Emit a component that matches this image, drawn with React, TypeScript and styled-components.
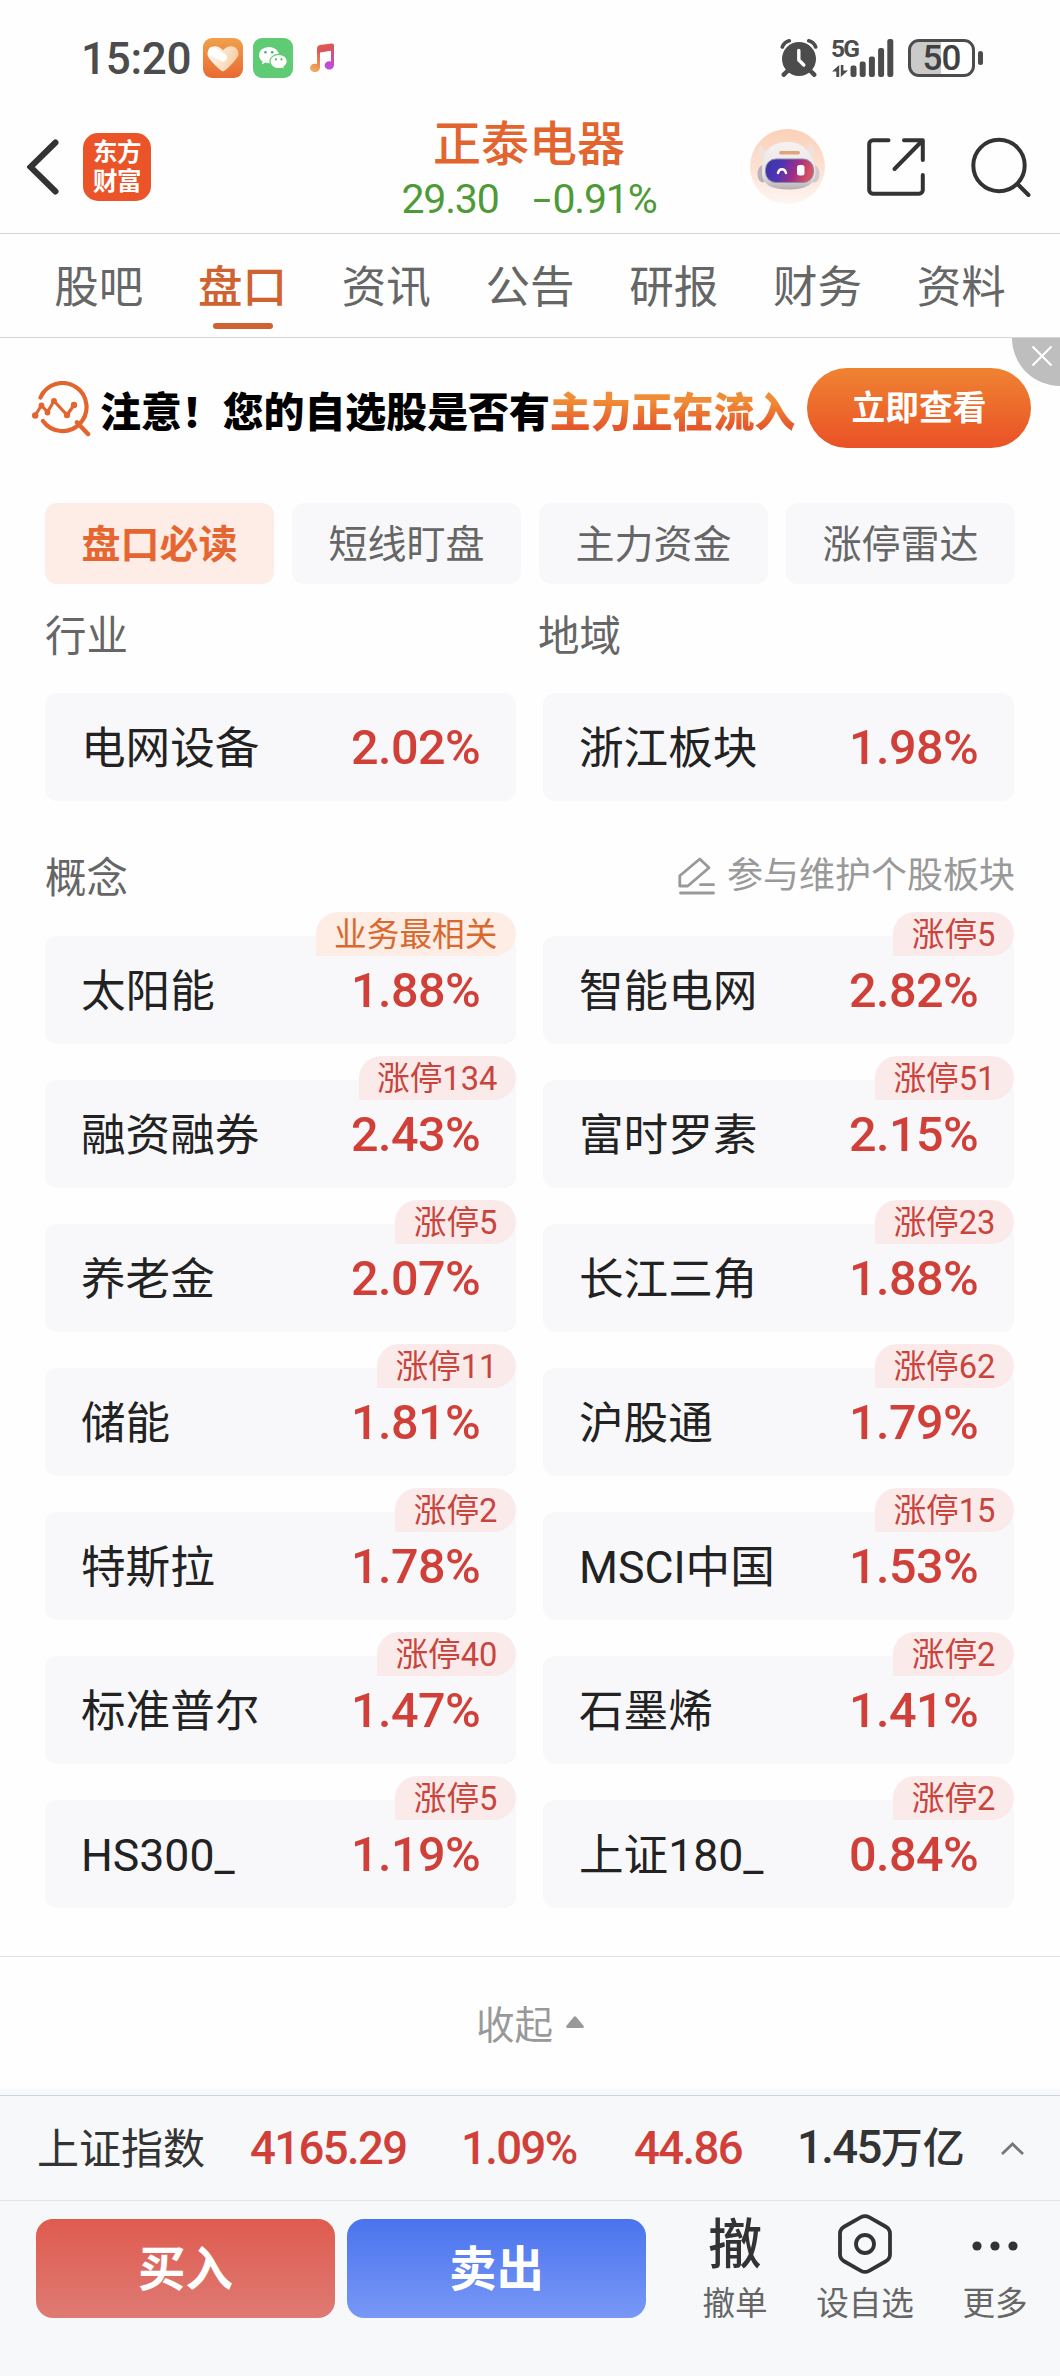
import React from "react";
import styled, { createGlobalStyle, css } from "styled-components";

const GlobalStyle = createGlobalStyle`
  * { box-sizing: border-box; }
  html, body { margin: 0; padding: 0; background: #fefefe; }
  body { font-family: Roboto, "Noto Sans CJK SC", sans-serif; color: #222; }
  button { font: inherit; border: 0; background: none; padding: 0; color: inherit; }
  svg { display: block; flex: none; }
`;

const Screen = styled.div`
  width: 1060px;
  height: 2376px;
  display: flex;
  flex-direction: column;
  background: #fefefe;
  overflow: hidden;
`;

const StatusBar = styled.header`
  height: 116px;
  padding: 0 77px 0 81px;
  display: flex;
  align-items: center;
  justify-content: space-between;
  color: #4c4c4c;
`;
const StatusGroup = styled.div<{ $gap: number }>`
  display: flex;
  align-items: center;
  gap: ${(p) => p.$gap}px;
`;
const Clock = styled.span`
  width: 112px;
  padding-top: 1px;
  font-size: 44px;
  font-weight: 500;
  line-height: 50px;
  letter-spacing: -0.3px;
  white-space: nowrap;
`;

const NavBar = styled.nav`
  height: 118px;
  flex: none;
  padding: 0 29px 0 27px;
  display: grid;
  grid-template-columns: 300px 1fr 300px;
  border-bottom: 1px solid #d5d5d5;
`;
const NavLeft = styled.div`
  display: flex;
  align-items: center;
  gap: 24px;
  height: 101px;
`;
const Logo = styled.div`
  width: 68px;
  height: 68px;
  border-radius: 15px;
  background: #ea5428;
  color: #fff;
  display: grid;
  grid-template-columns: 24px 24px;
  grid-auto-rows: 29px;
  justify-content: center;
  align-content: center;
  font-size: 24.5px;
  font-weight: 700;
  line-height: 29px;
  text-align: center;
`;
const StockTitle = styled.div`
  display: flex;
  flex-direction: column;
  align-items: center;
  padding-top: 1px;
`;
const StockName = styled.h1`
  margin: 0;
  font-size: 48px;
  font-weight: 500;
  line-height: 56px;
  color: #e2652f;
`;
const StockQuote = styled.div`
  display: flex;
  gap: 34px;
  margin-top: 3px;
  font-size: 41px;
  letter-spacing: -1.200px;
  line-height: 46px;
  color: #4d9a37;
`;
const Sign = styled.span`
  display: inline-block;
  width: 20px;
  transform: scaleX(1.6);
  transform-origin: 0 50%;
`;
const NavRight = styled.div`
  display: flex;
  align-items: center;
  justify-content: flex-end;
  height: 101px;
`;

const TabBar = styled.div`
  height: 104px;
  flex: none;
  padding: 0 27px;
  display: grid;
  grid-template-columns: repeat(7, 1fr);
  border-bottom: 1px solid #d5d5d5;
`;
const Tab = styled.button<{ $active?: boolean }>`
  display: flex;
  flex-direction: column;
  align-items: center;
  padding-top: 26px;
  font-size: 44.5px;
  line-height: 56px;
  color: ${(p) => (p.$active ? "#cf6231" : "#666")};
  ${(p) =>
    p.$active &&
    css`
      font-weight: 500;
      &::after {
        content: "";
        width: 60px;
        height: 6px;
        margin-top: 7px;
        border-radius: 3px;
        background: #cf6231;
      }
    `}
`;

const Banner = styled.section`
  position: relative;
  height: 165px;
  flex: none;
  padding: 30px 29px 0 32px;
  display: flex;
  align-items: flex-start;
`;
const BannerText = styled.p`
  margin: 14px 0 0 9px;
  width: 707px;
  font-size: 40.9px;
  font-weight: 900;
  line-height: 62px;
  color: #000;
  white-space: nowrap;
`;
const Accent = styled.span`
  background: linear-gradient(#f08c35 25%, #e4572b 80%);
  background-clip: text;
  -webkit-background-clip: text;
  color: transparent;
`;
const BannerButton = styled.button`
  width: 224px;
  height: 80px;
  flex: none;
  padding-top: 1px;
  border-radius: 40px;
  background: linear-gradient(#ef8332, #ea5126);
  color: #fff;
  font-size: 33.7px;
  font-weight: 700;
  line-height: 79px;
`;
const CloseCorner = styled.button`
  position: absolute;
  top: 0;
  right: 0;
  width: 48px;
  height: 48px;
  border-bottom-left-radius: 48px;
  background: #bebebe;
  display: flex;
  padding: 8px 0 0 20px;
`;

const Filters = styled.div`
  flex: none;
  padding: 0 45px;
  display: grid;
  grid-template-columns: repeat(4, 1fr);
  gap: 18px;
`;
const Filter = styled.button<{ $active?: boolean }>`
  height: 81px;
  padding-top: 3px;
  border-radius: 12px;
  font-size: 39px;
  line-height: 78px;
  background: ${(p) => (p.$active ? "#fdede6" : "#f8f8fa")};
  color: ${(p) => (p.$active ? "#e56630" : "#666")};
  font-weight: ${(p) => (p.$active ? 700 : 400)};
`;

const SectionHead = styled.div<{ $height: number; $top: number }>`
  flex: none;
  height: ${(p) => p.$height}px;
  padding: ${(p) => p.$top}px 45px 0;
  display: grid;
  grid-template-columns: 493px 1fr;
`;
const SectionLabel = styled.h2`
  margin: 0;
  font-size: 41.5px;
  font-weight: 400;
  line-height: 52px;
  color: #666;
`;
const MaintainLink = styled.a`
  height: 46px;
  display: flex;
  align-items: center;
  justify-content: flex-end;
  gap: 12px;
  font-size: 36px;
  line-height: 46px;
  color: #999;
  white-space: nowrap;
`;

const BoardGrid = styled.div`
  flex: none;
  padding: 0 45px;
  display: grid;
  grid-template-columns: 471px 471px;
  column-gap: 27px;
  row-gap: 36px;
`;
const BoardCard = styled.article`
  position: relative;
  height: 108px;
  padding: 0 36px;
  border-radius: 12px;
  background: #f8f8fa;
  display: flex;
  align-items: center;
  justify-content: space-between;
`;
const BoardName = styled.span`
  padding-top: 3px;
  font-size: 44.6px;
  line-height: 60px;
  color: #222;
`;
const BoardChange = styled.span`
  padding-top: 2px;
  font-size: 48.500px;
  font-weight: 500;
  line-height: 60px;
  letter-spacing: -0.6px;
  color: #d04038;
`;
const Badge = styled.span<{ $tone: "hot" | "main" }>`
  position: absolute;
  top: -24px;
  right: 0;
  height: 44px;
  padding: 1px 18.5px 0;
  border-radius: 22px 22px 22px 0;
  font-size: 32.7px;
  line-height: 45px;
  background: ${(p) => (p.$tone === "hot" ? "#fbeaea" : "#fdede4")};
  color: ${(p) => (p.$tone === "hot" ? "#c8443c" : "#d9692f")};
`;

const Collapse = styled.button`
  flex: none;
  height: 133px;
  margin-top: 48px;
  padding-bottom: 2px;
  border-top: 1px solid #e2e2e2;
  display: flex;
  align-items: center;
  justify-content: center;
  gap: 13px;
  font-size: 38.5px;
  color: #999;
`;

const BottomPanel = styled.footer`
  flex: 1;
  padding-top: 6px;
  background: #f7f8fa;
`;
const IndexRow = styled.div`
  height: 106px;
  padding: 0 36px 0 37px;
  border-top: 1px solid #d2d5d7;
  border-bottom: 1px solid #e2e4e6;
  display: grid;
  grid-template-columns: 213px 211px 173px 163px 203px 1fr;
  align-items: center;
  line-height: 60px;
  white-space: nowrap;
`;
const IndexName = styled.span`
  padding-top: 4px;
  font-size: 42px;
  color: #333;
`;
const IndexValue = styled.span<{ $dark?: boolean }>`
  padding-top: 1px;
  font-size: 45.500px;
  font-weight: 500;
  letter-spacing: -1.6px;
  color: ${(p) => (p.$dark ? "#333" : "#d04038")};
`;
const Unit = styled.span`
  font-size: 42px;
  letter-spacing: 0;
`;
const ActionRow = styled.div`
  padding: 18px 0 0 36px;
  display: flex;
  align-items: flex-start;
`;
const TradeButton = styled.button<{ $side: "buy" | "sell" }>`
  width: 299px;
  height: 99px;
  flex: none;
  margin-right: 12px;
  padding-top: 3px;
  border-radius: 17px;
  color: #fff;
  font-size: 47.5px;
  font-weight: 700;
  line-height: 96px;
  background: ${(p) =>
    p.$side === "buy"
      ? "linear-gradient(#df5b4f, #de7a73)"
      : "linear-gradient(#4a74ee, #7898f6)"};
`;
const Tool = styled.button<{ $width: number }>`
  width: ${(p) => p.$width}px;
  flex: none;
  display: flex;
  flex-direction: column;
  align-items: center;
  color: #333;
`;
const ToolIcon = styled.span<{ $shift?: number }>`
  height: 62px;
  margin-top: -6px;
  padding-top: ${(p) => p.$shift ?? 0}px;
  display: flex;
  align-items: center;
  font-size: 54px;
  font-weight: 500;
  line-height: 58px;
`;
const ToolLabel = styled.span`
  margin-top: 7px;
  font-size: 32.6px;
  line-height: 44px;
  color: #666;
`;
const Tools = styled.div`
  display: flex;
  margin-left: 10px;
`;

const HeartIcon = () => (
  <svg width="40" height="40" viewBox="0 0 40 40">
    <defs>
      <linearGradient id="heartBg" x1="0" y1="0" x2="0" y2="1">
        <stop offset="0" stopColor="#f0a04a" />
        <stop offset="1" stopColor="#e86a34" />
      </linearGradient>
      <linearGradient id="heartFill" x1="0" y1="0" x2="1" y2="0.3">
        <stop offset="0" stopColor="#fff" />
        <stop offset="0.5" stopColor="#fde6d2" />
        <stop offset="1" stopColor="#f9cfa8" />
      </linearGradient>
    </defs>
    <rect width="40" height="40" rx="9" fill="url(#heartBg)" />
    <path d="M20 33.5C18 33.5 5 21 4.600 17 4.200 11 8 8.300 12 8.300c3.500 0 6 2 8 4 2-2 4.500-4 8-4 4 0 7.800 3 7.500 8C35 21 22 33.500 20 33.500z" fill="url(#heartFill)" />
    <path d="M9.500 13L20 19.500" stroke="#fff" strokeWidth="8" strokeLinecap="round" />
  </svg>
);

const WeChatIcon = () => (
  <svg width="40" height="40" viewBox="0 0 40 40">
    <rect width="40" height="40" rx="9" fill="#5fcb74" />
    <path d="M16 9c-5.700 0-10 3.600-10 8.200 0 2.600 1.400 4.800 3.600 6.300L8.800 26.500l3.500-1.900c1.200.4 2.400.6 3.700.6 5.600 0 10-3.500 10-8S21.600 9 16 9z" fill="#fff" />
    <path d="M25.800 16.300c-4.900 0-8.800 3.200-8.800 7.200s3.900 7.200 8.800 7.200c1.100 0 2.100-.2 3-.5l2.700 1.500-.6-2.600c2.100-1.300 3.400-3.300 3.400-5.600 0-4-3.700-7.200-8.500-7.200z" fill="#fff" stroke="#5fcb74" strokeWidth="1.200" />
    <g fill="#4fae63">
      <circle cx="12.500" cy="14.300" r="1.300" />
      <circle cx="19.200" cy="14.300" r="1.300" />
      <circle cx="23" cy="21.300" r="1.100" />
      <circle cx="28.500" cy="21.300" r="1.100" />
    </g>
  </svg>
);

const MusicIcon = () => (
  <svg width="26" height="30" viewBox="0 0 26 30">
    <defs>
      <linearGradient id="note" x1="0" y1="0" x2="0.200" y2="1">
        <stop offset="0" stopColor="#e0603f" />
        <stop offset="0.450" stopColor="#d8506a" />
        <stop offset="1" stopColor="#c04be0" />
      </linearGradient>
      <linearGradient id="noteLeft" x1="0.600" y1="0" x2="0.300" y2="1">
        <stop offset="0" stopColor="#e0604a" />
        <stop offset="1" stopColor="#f0b060" />
      </linearGradient>
    </defs>
    <path d="M8 6.500h3V24c0 3-2.200 5-5.200 5C3 29 1 27.300 1 25s2-4.300 4.800-4.300c.8 0 1.500.1 2.200.4z" fill="url(#noteLeft)" />
    <path d="M8 10V5.500C8 3.500 9 2.500 11 2L22.500.500c1.700-.2 2.500.5 2.500 2V21.500c0 3-2 5-4.800 5-2.600 0-4.600-1.700-4.600-4s2-4.300 4.700-4.300c.7 0 1.200.1 1.700.3V7.800L11 9.500z" fill="url(#note)" />
  </svg>
);

const AlarmIcon = () => (
  <svg width="38" height="38" viewBox="0 0 38 38">
    <circle cx="19" cy="20" r="17" fill="#4c4c4c" />
    <g fill="none" stroke="#4c4c4c" strokeLinecap="round">
      <path d="M2.300 8C3.500 5 6 2.600 9.300 1.800M35.700 8C34.500 5 32 2.600 28.700 1.800" strokeWidth="3.600" />
      <path d="M7.500 32l-3.700 3.700M30.500 32l3.700 3.700" strokeWidth="4.500" />
    </g>
    <path d="M18.800 11.500V21l5 5" fill="none" stroke="#fefefe" strokeWidth="3.400" strokeLinecap="round" strokeLinejoin="round" />
  </svg>
);

const NetworkBox = styled.div`
  display: grid;
  grid-template-columns: 18px 44px;
  align-items: end;
  width: 62px;
  height: 38px;
  position: relative;
`;
const NetworkLabel = styled.span`
  position: absolute;
  left: -1px;
  top: -1px;
  font-size: 24.5px;
  line-height: 22px;
  font-weight: 700;
  letter-spacing: -1.800px;
`;
const DataArrows = () => (
  <svg width="16" height="12" viewBox="0 0 16 12" fill="#4c4c4c">
    <path d="M7.200 12H4.300V6.500H0L7.200 0zM8.800 0h2.600v5.500H16L8.800 12z" />
  </svg>
);
const SignalBars = () => (
  <svg width="44" height="38" viewBox="0 0 44 38" fill="#4c4c4c">
    <rect x="0.500" y="26.500" width="6" height="11.500" rx="2.200" />
    <rect x="9.700" y="22.500" width="6" height="15.500" rx="2.200" />
    <rect x="18.900" y="17.500" width="6" height="20.500" rx="2.200" />
    <rect x="28.100" y="9" width="6" height="29" rx="2.200" />
    <rect x="37.300" y="0" width="6" height="38" rx="2.200" />
  </svg>
);
const BatteryWrap = styled.div`
  display: flex;
  align-items: center;
  gap: 3px;
  &::after {
    content: "";
    width: 5px;
    height: 14px;
    border-radius: 3px;
    background: #4c4c4c;
  }
`;
const BatteryBody = styled.span`
  width: 67px;
  height: 38px;
  border: 3px solid #4c4c4c;
  border-radius: 11px;
  background: linear-gradient(90deg, #cacaca 50%, #fefefe 50%);
  color: #404040;
  font-size: 35px;
  font-weight: 500;
  line-height: 33px;
  letter-spacing: -1px;
  text-align: center;
`;

const BackIcon = () => (
  <svg width="32" height="56" viewBox="0 0 32 56">
    <path d="M28.500 3.500L3.500 28 28.500 52.500" fill="none" stroke="#333" strokeWidth="6" strokeLinecap="round" />
  </svg>
);

const AssistantIcon = () => (
  <svg width="75" height="75" viewBox="0 0 75 75">
    <defs>
      <linearGradient id="haloBg" x1="0" y1="0" x2="0" y2="1">
        <stop offset="0" stopColor="#fbd0b8" />
        <stop offset="0.600" stopColor="#fce4d8" />
        <stop offset="1" stopColor="#fef6f2" />
      </linearGradient>
      <linearGradient id="head" x1="0" y1="0" x2="0" y2="1">
        <stop offset="0" stopColor="#f7f3f2" />
        <stop offset="0.700" stopColor="#e6e1e3" />
        <stop offset="1" stopColor="#b5afb3" />
      </linearGradient>
      <linearGradient id="visor" x1="0" y1="0" x2="1" y2="0.200">
        <stop offset="0" stopColor="#3b34a2" />
        <stop offset="0.350" stopColor="#4b35b5" />
        <stop offset="0.700" stopColor="#a02f86" />
        <stop offset="1" stopColor="#d65260" />
      </linearGradient>
    </defs>
    <circle cx="37.500" cy="37.500" r="37.500" fill="url(#haloBg)" />
    <path d="M11.500 15.500c-4 4-3.500 10.500 1 13.500l6-7.500c-4 0-6.500-2-7-6zM60.500 14.500c4.500 4 4.500 10.500 0 14l-7-7c4 0 6.500-2.500 7-7z" fill="#efe2de" />
    <ellipse cx="12.500" cy="45" rx="5" ry="8.500" fill="#b9b3b9" />
    <ellipse cx="64.500" cy="45" rx="5" ry="8.500" fill="#cfc8cc" />
    <path d="M37 13c11 0 19 4.500 23 13 4 5 5.500 11 5.500 18C65.500 55 56 60.500 38.500 60.500S12 55 12 44c0-6 .5-13 3-19 4-8 12-12 22-12z" fill="url(#head)" />
    <rect x="29" y="22" width="21" height="3.600" rx="1.800" fill="#dfa675" />
    <rect x="15.500" y="30" width="48" height="23.500" rx="10.500" fill="url(#visor)" stroke="#8d86a8" strokeWidth="1" />
    <path d="M28 44c1-5 7-5 8 0" fill="none" stroke="#fff" strokeWidth="2.400" strokeLinecap="round" />
    <rect x="47" y="36" width="7.500" height="10.500" rx="2.500" fill="#fff" />
  </svg>
);

const ShareIcon = () => (
  <svg width="58" height="58" viewBox="0 0 58 58" fill="none" stroke="#333" strokeWidth="4" strokeLinecap="round" strokeLinejoin="round">
    <path d="M21.500 2.200H6A3.800 3.800 0 0 0 2.200 6V52A3.800 3.800 0 0 0 6 55.800H52A3.800 3.800 0 0 0 55.800 52V37" />
    <path d="M37 2.200H55.800V22M55 3L27.500 31" />
  </svg>
);

const SearchIcon = () => (
  <svg width="60" height="60" viewBox="0 0 60 60" fill="none" stroke="#333" strokeWidth="4" strokeLinecap="round">
    <circle cx="28" cy="28.500" r="25.700" />
    <path d="M47 47.500L57.500 58" />
  </svg>
);

const TrendIcon = () => (
  <svg width="59" height="56" viewBox="0 0 59 56" fill="none" stroke="#e2652f" strokeLinecap="round" strokeLinejoin="round">
    <path d="M8.500 16.500A24 24 0 1 1 11 40" strokeWidth="4.200" />
    <path d="M45 41.500L56 53" strokeWidth="4.500" />
    <path d="M3 34.500L9.500 24.500 15.500 31 22 20 35 34 42 24" strokeWidth="3.200" />
    <g fill="#e2652f" stroke="none">
      <circle cx="3.200" cy="34.500" r="3.200" />
      <circle cx="9.500" cy="24.500" r="2.900" />
      <circle cx="15.500" cy="31.500" r="2.900" />
      <circle cx="22" cy="20" r="3" />
      <circle cx="35" cy="34" r="3.200" />
      <circle cx="42" cy="24" r="3.200" />
    </g>
  </svg>
);

const CloseIcon = () => (
  <svg width="20" height="20" viewBox="0 0 20 20" fill="none" stroke="#fff" strokeWidth="2.200">
    <path d="M.5.5l19 19M19.500.5l-19 19" />
  </svg>
);

const PencilIcon = () => (
  <svg width="37" height="38" viewBox="0 0 37 38" fill="none" stroke="#999" strokeWidth="2.800" strokeLinecap="round" strokeLinejoin="round">
    <path d="M1.800 29V18.800L21.800 2 31 10.800 9.800 29zM22.500 27.700H35.500M2.500 36H35.500" />
  </svg>
);

const TriangleUp = () => (
  <svg width="18" height="12" viewBox="0 0 18 12">
    <path d="M7.500 1.200Q9-.6 10.500 1.200L17.300 9.500Q18.600 12 16.500 12H1.500Q-.6 12 .7 9.500z" fill="#999" />
  </svg>
);

const ChevronUp = () => (
  <svg width="24" height="13" viewBox="0 0 24 13" fill="none" stroke="#777" strokeWidth="2.800">
    <path d="M2 12L12.500 2 23 12" />
  </svg>
);

const HexIcon = () => (
  <svg width="54" height="60" viewBox="0 0 54 60" fill="none" stroke="#333" strokeWidth="3.800">
    <path d="M23 3.200Q27 1 31 3.200L47.500 12.500Q52 15 52 19.500V40.500Q52 45 47.500 47.500L31 56.800Q27 59 23 56.800L6.500 47.500Q2 45 2 40.500V19.500Q2 15 6.500 12.500z" />
    <circle cx="27" cy="30" r="9" />
  </svg>
);

const DotsIcon = () => (
  <svg width="48" height="10" viewBox="0 0 48 10" fill="#333">
    <circle cx="6" cy="5" r="4.600" />
    <circle cx="24" cy="5" r="4.600" />
    <circle cx="42" cy="5" r="4.600" />
  </svg>
);

const IconSlot = styled.span<{ $right?: number; $top?: number; $left?: number }>`
  display: flex;
  margin-right: ${(p) => p.$right ?? 0}px;
  margin-left: ${(p) => p.$left ?? 0}px;
  margin-top: ${(p) => p.$top ?? 0}px;
`;

const tabs = ["股吧", "盘口", "资讯", "公告", "研报", "财务", "资料"];
const filters = ["盘口必读", "短线盯盘", "主力资金", "涨停雷达"];

type Board = { name: string; change: string; badge?: string; main?: boolean };

const sectors: Board[] = [
  { name: "电网设备", change: "2.02%" },
  { name: "浙江板块", change: "1.98%" },
];

const concepts: Board[] = [
  { name: "太阳能", change: "1.88%", badge: "业务最相关", main: true },
  { name: "智能电网", change: "2.82%", badge: "涨停5" },
  { name: "融资融券", change: "2.43%", badge: "涨停134" },
  { name: "富时罗素", change: "2.15%", badge: "涨停51" },
  { name: "养老金", change: "2.07%", badge: "涨停5" },
  { name: "长江三角", change: "1.88%", badge: "涨停23" },
  { name: "储能", change: "1.81%", badge: "涨停11" },
  { name: "沪股通", change: "1.79%", badge: "涨停62" },
  { name: "特斯拉", change: "1.78%", badge: "涨停2" },
  { name: "MSCI中国", change: "1.53%", badge: "涨停15" },
  { name: "标准普尔", change: "1.47%", badge: "涨停40" },
  { name: "石墨烯", change: "1.41%", badge: "涨停2" },
  { name: "HS300_", change: "1.19%", badge: "涨停5" },
  { name: "上证180_", change: "0.84%", badge: "涨停2" },
];

const Boards = ({ items }: { items: Board[] }) => (
  <BoardGrid>
    {items.map((b) => (
      <BoardCard key={b.name}>
        <BoardName>{b.name}</BoardName>
        <BoardChange>{b.change}</BoardChange>
        {b.badge && <Badge $tone={b.main ? "main" : "hot"}>{b.badge}</Badge>}
      </BoardCard>
    ))}
  </BoardGrid>
);

export default function App() {
  return (
    <>
      <GlobalStyle />
      <Screen>
        <StatusBar>
          <StatusGroup $gap={10}>
            <Clock>15:20</Clock>
            <HeartIcon />
            <WeChatIcon />
            <IconSlot $left={6}>
              <MusicIcon />
            </IconSlot>
          </StatusGroup>
          <StatusGroup $gap={14}>
            <AlarmIcon />
            <NetworkBox>
              <NetworkLabel>5G</NetworkLabel>
              <DataArrows />
              <SignalBars />
            </NetworkBox>
            <BatteryWrap>
              <BatteryBody>50</BatteryBody>
            </BatteryWrap>
          </StatusGroup>
        </StatusBar>

        <NavBar>
          <NavLeft>
            <BackIcon />
            <Logo>
              <span>东</span>
              <span>方</span>
              <span>财</span>
              <span>富</span>
            </Logo>
          </NavLeft>
          <StockTitle>
            <StockName>正泰电器</StockName>
            <StockQuote>
              <span>29.30</span>
              <span>
                <Sign>-</Sign>0.91%
              </span>
            </StockQuote>
          </StockTitle>
          <NavRight>
            <IconSlot $right={42}>
              <AssistantIcon />
            </IconSlot>
            <IconSlot $right={46}>
              <ShareIcon />
            </IconSlot>
            <SearchIcon />
          </NavRight>
        </NavBar>

        <TabBar>
          {tabs.map((t) => (
            <Tab key={t} $active={t === "盘口"}>
              {t}
            </Tab>
          ))}
        </TabBar>

        <Banner>
          <IconSlot $top={13}>
            <TrendIcon />
          </IconSlot>
          <BannerText>
            注意！您的自选股是否有<Accent>主力正在流入</Accent>
          </BannerText>
          <BannerButton>立即查看</BannerButton>
          <CloseCorner>
            <CloseIcon />
          </CloseCorner>
        </Banner>

        <Filters>
          {filters.map((f, i) => (
            <Filter key={f} $active={i === 0}>
              {f}
            </Filter>
          ))}
        </Filters>

        <SectionHead $height={109} $top={27}>
          <SectionLabel>行业</SectionLabel>
          <SectionLabel>地域</SectionLabel>
        </SectionHead>
        <Boards items={sectors} />

        <SectionHead $height={135} $top={52}>
          <SectionLabel>概念</SectionLabel>
          <MaintainLink>
            <PencilIcon />
            参与维护个股板块
          </MaintainLink>
        </SectionHead>
        <Boards items={concepts} />

        <Collapse>
          收起
          <TriangleUp />
        </Collapse>

        <BottomPanel>
          <IndexRow>
            <IndexName>上证指数</IndexName>
            <IndexValue>4165.29</IndexValue>
            <IndexValue>1.09%</IndexValue>
            <IndexValue>44.86</IndexValue>
            <IndexValue $dark>
              1.45<Unit>万亿</Unit>
            </IndexValue>
            <ChevronUp />
          </IndexRow>
          <ActionRow>
            <TradeButton $side="buy">买入</TradeButton>
            <TradeButton $side="sell">卖出</TradeButton>
            <Tools>
              <Tool $width={134}>
                <ToolIcon $shift={4}>撤</ToolIcon>
                <ToolLabel>撤单</ToolLabel>
              </Tool>
              <Tool $width={126}>
                <ToolIcon>
                  <HexIcon />
                </ToolIcon>
                <ToolLabel>设自选</ToolLabel>
              </Tool>
              <Tool $width={134}>
                <ToolIcon $shift={3}>
                  <DotsIcon />
                </ToolIcon>
                <ToolLabel>更多</ToolLabel>
              </Tool>
            </Tools>
          </ActionRow>
        </BottomPanel>
      </Screen>
    </>
  );
}
